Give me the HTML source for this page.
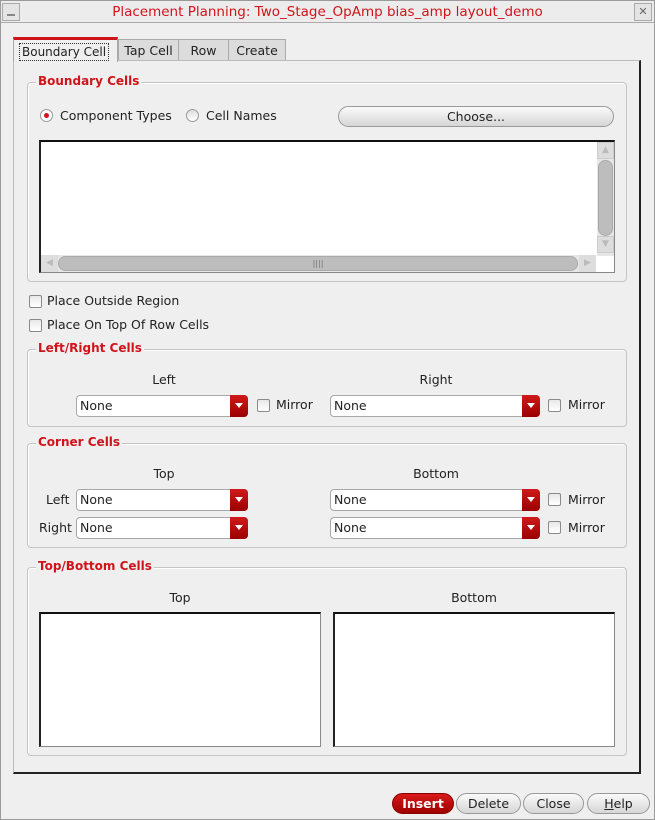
<!DOCTYPE html>
<html><head><style>
*{box-sizing:border-box;margin:0;padding:0}
body{width:655px;height:820px;background:#efefef;font-family:"DejaVu Sans","Liberation Sans",sans-serif;font-size:12.5px;color:#222;position:relative;overflow:hidden}
.a{position:absolute}
.grp{position:absolute;border:1px solid #c4c4c4;border-radius:4px;box-shadow:1px 1px 0 #fff inset}
.lg{position:absolute;top:-9px;left:8px;background:#efefef;color:#d0141b;font-weight:bold;font-size:12px;padding:0 2px;line-height:14px}
.cb{position:absolute;width:13px;height:13px;border:1px solid #8a8a8a;background:linear-gradient(#e8e8e8,#fff);border-radius:2px}
.combo{position:absolute;height:22px;background:#fff;border:1px solid #a8a8a8;border-radius:4px;font-size:12.5px;line-height:20px;padding-left:3px}
.combo .ar{position:absolute;right:-1px;top:-1px;width:18px;height:22px;background:linear-gradient(#d01a1a,#9a0000);border-radius:0 4px 4px 0}
.combo .ar:after{content:"";position:absolute;left:5px;top:8px;border-left:4px solid transparent;border-right:4px solid transparent;border-top:5px solid #fff}
.btn{position:absolute;height:21px;border:1px solid #999;border-radius:11px;background:linear-gradient(#fafafa,#d6d6d6);text-align:center;line-height:19px;font-size:12.5px}
.list{position:absolute;background:#fff;border:1px solid #888;border-top:2px solid #111;border-left:2px solid #222}
</style></head><body>
<div class="a" style="left:0;top:0;width:655px;height:820px;border:1px solid #9a9a9a"></div>
<div class="a" style="left:1px;top:1px;width:653px;height:22px;border-bottom:1px solid #aaa;background:#ececec"></div>
<div class="a" style="left:2px;top:3px;width:18px;height:18px;border:1px solid #aaa;background:#e4e4e4"><div class="a" style="left:4px;top:10px;width:8px;height:2px;background:#888"></div></div>
<div class="a" style="left:634px;top:3px;width:18px;height:18px;border:1px solid #aaa;background:#e4e4e4;font-size:11px;text-align:center;line-height:16px;color:#666">✕</div>
<div class="a" style="left:0;width:655px;top:4px;text-align:center;color:#d0141b;font-size:13.5px;line-height:16px">Placement Planning: Two_Stage_OpAmp bias_amp layout_demo</div>

<div class="a" style="left:118px;top:39px;width:61px;height:22px;border:1px solid #aaa;background:#dcdcdc;text-align:center;line-height:22px">Tap Cell</div>
<div class="a" style="left:178px;top:39px;width:51px;height:22px;border:1px solid #aaa;background:#dcdcdc;text-align:center;line-height:22px">Row</div>
<div class="a" style="left:228px;top:39px;width:58px;height:22px;border:1px solid #aaa;background:#dcdcdc;text-align:center;line-height:22px">Create</div>
<div class="a" style="left:13px;top:60px;width:628px;height:714px;border:1px solid #bbb;border-right:2px solid #222;border-bottom:2px solid #222"></div>
<div class="a" style="left:13px;top:37px;width:105px;height:25px;border:1px solid #aaa;border-top:3px solid #d0141b;border-bottom:none;background:#efefef"><div class="a" style="left:5px;top:3px;border:1px dotted #333;padding:0 2px;line-height:16px;font-size:12px">Boundary Cell</div></div>

<div class="grp" style="left:27px;top:82px;width:600px;height:200px"><div class="lg">Boundary Cells</div></div>
<div class="a" style="left:40px;top:109px;width:13px;height:13px;border-radius:50%;border:1px solid #999;background:#fff"><div class="a" style="left:3px;top:3px;width:5px;height:5px;border-radius:50%;background:#d0141b"></div></div>
<div class="a" style="left:60px;top:108px;line-height:16px">Component Types</div>
<div class="a" style="left:186px;top:109px;width:13px;height:13px;border-radius:50%;border:1px solid #999;background:linear-gradient(#ddd,#fff)"></div>
<div class="a" style="left:206px;top:108px;line-height:16px">Cell Names</div>
<div class="btn" style="left:338px;top:106px;width:276px">Choose...</div>
<div class="list" style="left:39px;top:140px;width:576px;height:133px">
 <div class="a" style="right:0;top:0;width:17px;height:114px;background:#e6e6e6">
  <div class="a" style="left:0;top:0;width:17px;height:17px;background:#ddd;border:1px solid #ccc;color:#bbb;font-size:9px;text-align:center;line-height:15px">▲</div>
  <div class="a" style="left:1px;top:18px;width:15px;height:76px;border-radius:8px;background:#bdbdbd;border:1px solid #aaa"></div>
  <div class="a" style="left:0;top:94px;width:17px;height:17px;background:#ddd;border:1px solid #ccc;color:#bbb;font-size:9px;text-align:center;line-height:15px">▼</div>
 </div>
 <div class="a" style="left:0;bottom:0;width:555px;height:17px;background:#e6e6e6">
  <div class="a" style="left:0;top:0;width:17px;height:17px;background:#ddd;color:#bbb;font-size:9px;text-align:center;line-height:17px">◀</div>
  <div class="a" style="left:17px;top:1px;width:520px;height:15px;border-radius:8px;background:#bdbdbd;border:1px solid #aaa;text-align:center;font-size:8px;line-height:13px;color:#777">||||</div>
  <div class="a" style="right:0;top:0;width:17px;height:17px;background:#ddd;color:#bbb;font-size:9px;text-align:center;line-height:17px">▶</div>
 </div>
</div>

<div class="cb" style="left:29px;top:295px"></div><div class="a" style="left:47px;top:293px;line-height:16px">Place Outside Region</div>
<div class="cb" style="left:29px;top:319px"></div><div class="a" style="left:47px;top:317px;line-height:16px">Place On Top Of Row Cells</div>

<div class="grp" style="left:27px;top:349px;width:600px;height:78px"><div class="lg">Left/Right Cells</div></div>
<div class="a" style="left:140px;top:372px;width:48px;text-align:center;line-height:16px">Left</div>
<div class="a" style="left:406px;top:372px;width:60px;text-align:center;line-height:16px">Right</div>
<div class="combo" style="left:76px;top:395px;width:172px">None<div class="ar"></div></div>
<div class="cb" style="left:257px;top:399px"></div><div class="a" style="left:276px;top:397px;line-height:16px">Mirror</div>
<div class="combo" style="left:330px;top:395px;width:210px">None<div class="ar"></div></div>
<div class="cb" style="left:548px;top:399px"></div><div class="a" style="left:568px;top:397px;line-height:16px">Mirror</div>

<div class="grp" style="left:27px;top:443px;width:600px;height:105px"><div class="lg">Corner Cells</div></div>
<div class="a" style="left:140px;top:466px;width:48px;text-align:center;line-height:16px">Top</div>
<div class="a" style="left:406px;top:466px;width:60px;text-align:center;line-height:16px">Bottom</div>
<div class="a" style="left:46px;top:492px;line-height:16px">Left</div>
<div class="a" style="left:39px;top:520px;line-height:16px">Right</div>
<div class="combo" style="left:76px;top:489px;width:172px">None<div class="ar"></div></div>
<div class="combo" style="left:76px;top:517px;width:172px">None<div class="ar"></div></div>
<div class="combo" style="left:330px;top:489px;width:210px">None<div class="ar"></div></div>
<div class="combo" style="left:330px;top:517px;width:210px">None<div class="ar"></div></div>
<div class="cb" style="left:548px;top:493px"></div><div class="a" style="left:568px;top:492px;line-height:16px">Mirror</div>
<div class="cb" style="left:548px;top:521px"></div><div class="a" style="left:568px;top:520px;line-height:16px">Mirror</div>

<div class="grp" style="left:27px;top:567px;width:600px;height:189px"><div class="lg">Top/Bottom Cells</div></div>
<div class="a" style="left:156px;top:590px;width:48px;text-align:center;line-height:16px">Top</div>
<div class="a" style="left:444px;top:590px;width:60px;text-align:center;line-height:16px">Bottom</div>
<div class="list" style="left:39px;top:612px;width:282px;height:135px"></div>
<div class="list" style="left:333px;top:612px;width:282px;height:135px"></div>

<div class="btn" style="left:392px;top:793px;width:62px;background:linear-gradient(#d81a1a,#a00000);border-color:#800;color:#fff;font-weight:bold">Insert</div>
<div class="btn" style="left:456px;top:793px;width:65px">Delete</div>
<div class="btn" style="left:523px;top:793px;width:61px">Close</div>
<div class="btn" style="left:587px;top:793px;width:63px"><u>H</u>elp</div>
</body></html>
